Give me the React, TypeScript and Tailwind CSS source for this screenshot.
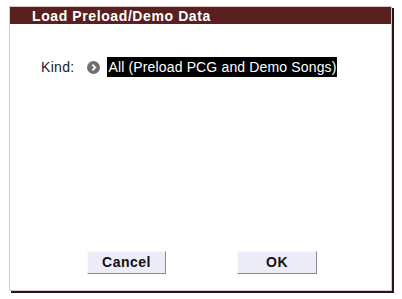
import React from "react";

export default function App() {
  return (
    <div className="w-[402px] h-[299px] bg-white pt-[6px] pl-[9px]" style={{ fontFamily: '"Liberation Sans", Arial, sans-serif' }}>
      <div className="w-[383px] h-[285px] border border-[#dcc8c8] bg-white flex flex-col shadow-[2px_2px_0_0_#2a1414]">
        <div className="h-[17px] bg-[#5a1f1f] pl-[22px] flex items-center">
          <span className="text-white font-bold text-[14px] tracking-[0.6px] leading-none">Load Preload/Demo Data</span>
        </div>
        <div className="flex items-center mt-[33px] pl-[31px] h-[20px]">
          <span className="text-[14px] text-[#222] tracking-[0.3px]">Kind:</span>
          <span className="ml-[13px] w-[13px] h-[13px] rounded-full bg-[#707070] flex items-center justify-center">
            <svg width="9" height="9" viewBox="0 0 8 8">
              <path d="M3 1.5 L5.5 4 L3 6.5" fill="none" stroke="white" strokeWidth="1.6" />
            </svg>
          </span>
          <span className="ml-[7px] bg-black text-white text-[14px] h-[20px] w-[230px] flex items-center pl-[1px] tracking-[0.15px] whitespace-nowrap overflow-hidden">All (Preload PCG and Demo Songs)</span>
        </div>
        <div className="mt-auto mb-[16px] flex pl-[77px] gap-[71px]">
          <button className="w-[79px] h-[23px] bg-[#ececf8] border border-t-[#f8f8ff] border-l-[#f8f8ff] border-b-[#8a8a96] border-r-[#8a8a96] text-[14px] font-bold text-[#111] tracking-[0.5px]">Cancel</button>
          <button className="w-[80px] h-[23px] bg-[#ececf8] border border-t-[#f8f8ff] border-l-[#f8f8ff] border-b-[#8a8a96] border-r-[#8a8a96] text-[14px] font-bold text-[#111] tracking-[0.5px]">OK</button>
        </div>
      </div>
    </div>
  );
}
